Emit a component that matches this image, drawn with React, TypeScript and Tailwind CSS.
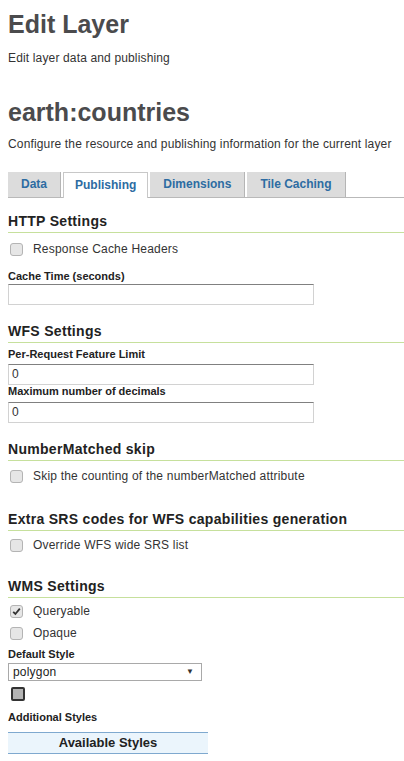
import React from 'react';

const font = { fontFamily: '"Liberation Sans", Arial, sans-serif' };

function SectionHeading({ children, className = '' }: { children: React.ReactNode; className?: string }) {
  return (
    <h3
      className={`text-[14px] leading-[18px] font-bold tracking-[0.3px] text-[#222] pb-[2px] border-b border-[#c6e09c] ${className}`}
    >
      {children}
    </h3>
  );
}

function Checkbox({ checked = false }: { checked?: boolean }) {
  return (
    <span className="ml-[2px] w-[13px] h-[13px] shrink-0 rounded-[3px] border border-[#b4b4b4] bg-[#e6e6e6] flex items-center justify-center">
      {checked && (
        <svg width="9" height="9" viewBox="0 0 9 9">
          <path d="M1.2 4.8 L3.4 7 L7.8 1.6" fill="none" stroke="#333" strokeWidth="1.8" />
        </svg>
      )}
    </span>
  );
}

function CheckRow({ label, checked, className = '' }: { label: string; checked?: boolean; className?: string }) {
  return (
    <label className={`flex items-center h-[16px] text-[12px] leading-[16px] tracking-[0.2px] text-[#333] ${className}`}>
      <Checkbox checked={checked} />
      <span className="ml-[10px]">{label}</span>
    </label>
  );
}

function FieldLabel({ children, className = '' }: { children: React.ReactNode; className?: string }) {
  return <div className={`text-[11px] leading-[12px] font-bold text-[#222] ${className}`}>{children}</div>;
}

function TextInput({ value = '', className = '' }: { value?: string; className?: string }) {
  return (
    <div
      className={`w-[306px] h-[21px] border border-[#d2d2d2] border-t-[#808080] pl-[3px] text-[12px] leading-[19px] text-[#333] ${className}`}
    >
      {value}
    </div>
  );
}

const tabs = ['Data', 'Publishing', 'Dimensions', 'Tile Caching'];

export default function App() {
  return (
    <div className="min-h-[761px] bg-white px-[8px] overflow-hidden" style={font}>
      {/* Page header */}
      <h1 className="pt-[8px] text-[25px] leading-[32px] font-bold text-[#4b4b4d]">Edit Layer</h1>
      <p className="mt-[10px] text-[12px] leading-[16px] tracking-[0.15px] text-[#333]">Edit layer data and publishing</p>

      <h2 className="mt-[30px] text-[25px] leading-[32px] font-bold text-[#4b4b4d]">earth:countries</h2>
      <p className="mt-[8px] text-[12px] leading-[16px] tracking-[0.15px] text-[#333]">
        Configure the resource and publishing information for the current layer
      </p>

      {/* Tabs */}
      <div className="mt-[20px] -mr-[8px] flex items-end gap-[2px] border-b border-[#b9b9b9] h-[26px]">
        {tabs.map((t) =>
          t === 'Publishing' ? (
            <div
              key={t}
              className="h-[26px] -mb-[1px] px-[11px] bg-white border border-b-0 border-[#c8c8c8] text-[12px] font-bold text-[#2d6ca2] leading-[25px]"
            >
              {t}
            </div>
          ) : (
            <div
              key={t}
              className="h-[25px] px-[13px] bg-[#dcdcdc] border-r border-[#b5b5b5] text-[12px] font-bold text-[#2d6ca2] leading-[25px]"
            >
              {t}
            </div>
          )
        )}
      </div>

      {/* HTTP */}
      <div className="-mr-[8px]">
        <SectionHeading className="mt-[14px]">HTTP Settings</SectionHeading>
      </div>
      <CheckRow className="mt-[8px]" label="Response Cache Headers" />
      <FieldLabel className="mt-[13px]">Cache Time (seconds)</FieldLabel>
      <TextInput className="mt-[2px]" />

      {/* WFS */}
      <div className="-mr-[8px]">
        <SectionHeading className="mt-[17px]">WFS Settings</SectionHeading>
      </div>
      <FieldLabel className="mt-[5px]">Per-Request Feature Limit</FieldLabel>
      <TextInput className="mt-[4px]" value="0" />
      <FieldLabel>Maximum number of decimals</FieldLabel>
      <TextInput className="mt-[5px]" value="0" />

      <div className="-mr-[8px]">
        <SectionHeading className="mt-[17px]">NumberMatched skip</SectionHeading>
      </div>
      <CheckRow className="mt-[7px]" label="Skip the counting of the numberMatched attribute" />

      <div className="-mr-[8px]">
        <SectionHeading className="mt-[26px]">Extra SRS codes for WFS capabilities generation</SectionHeading>
      </div>
      <CheckRow className="mt-[6px]" label="Override WFS wide SRS list" />

      {/* WMS */}
      <div className="-mr-[8px]">
        <SectionHeading className="mt-[24px]">WMS Settings</SectionHeading>
      </div>
      <CheckRow className="mt-[5px]" label="Queryable" checked />
      <CheckRow className="mt-[6px]" label="Opaque" />

      <FieldLabel className="mt-[7px]">Default Style</FieldLabel>
      <div className="mt-[3px] w-[194px] h-[18px] border border-[#a9a9a9] flex items-center justify-between pl-[4px] pr-[7px] text-[12px] tracking-[0.2px] text-[#222]">
        <span>polygon</span>
        <span className="text-[8px] text-[#333]">▼</span>
      </div>
      <div className="mt-[6px] ml-[3px] w-[14px] h-[14px] rounded-[2px] border-2 border-[#333] bg-[#b4b4b4]" />

      <FieldLabel className="mt-[10px]">Additional Styles</FieldLabel>
      <div className="mt-[9px] w-[200px] h-[22px] bg-[#ebf5fc] border-y border-[#7fa9cf] flex items-center justify-center text-[13px] font-bold text-[#222]">
        Available Styles
      </div>
    </div>
  );
}
